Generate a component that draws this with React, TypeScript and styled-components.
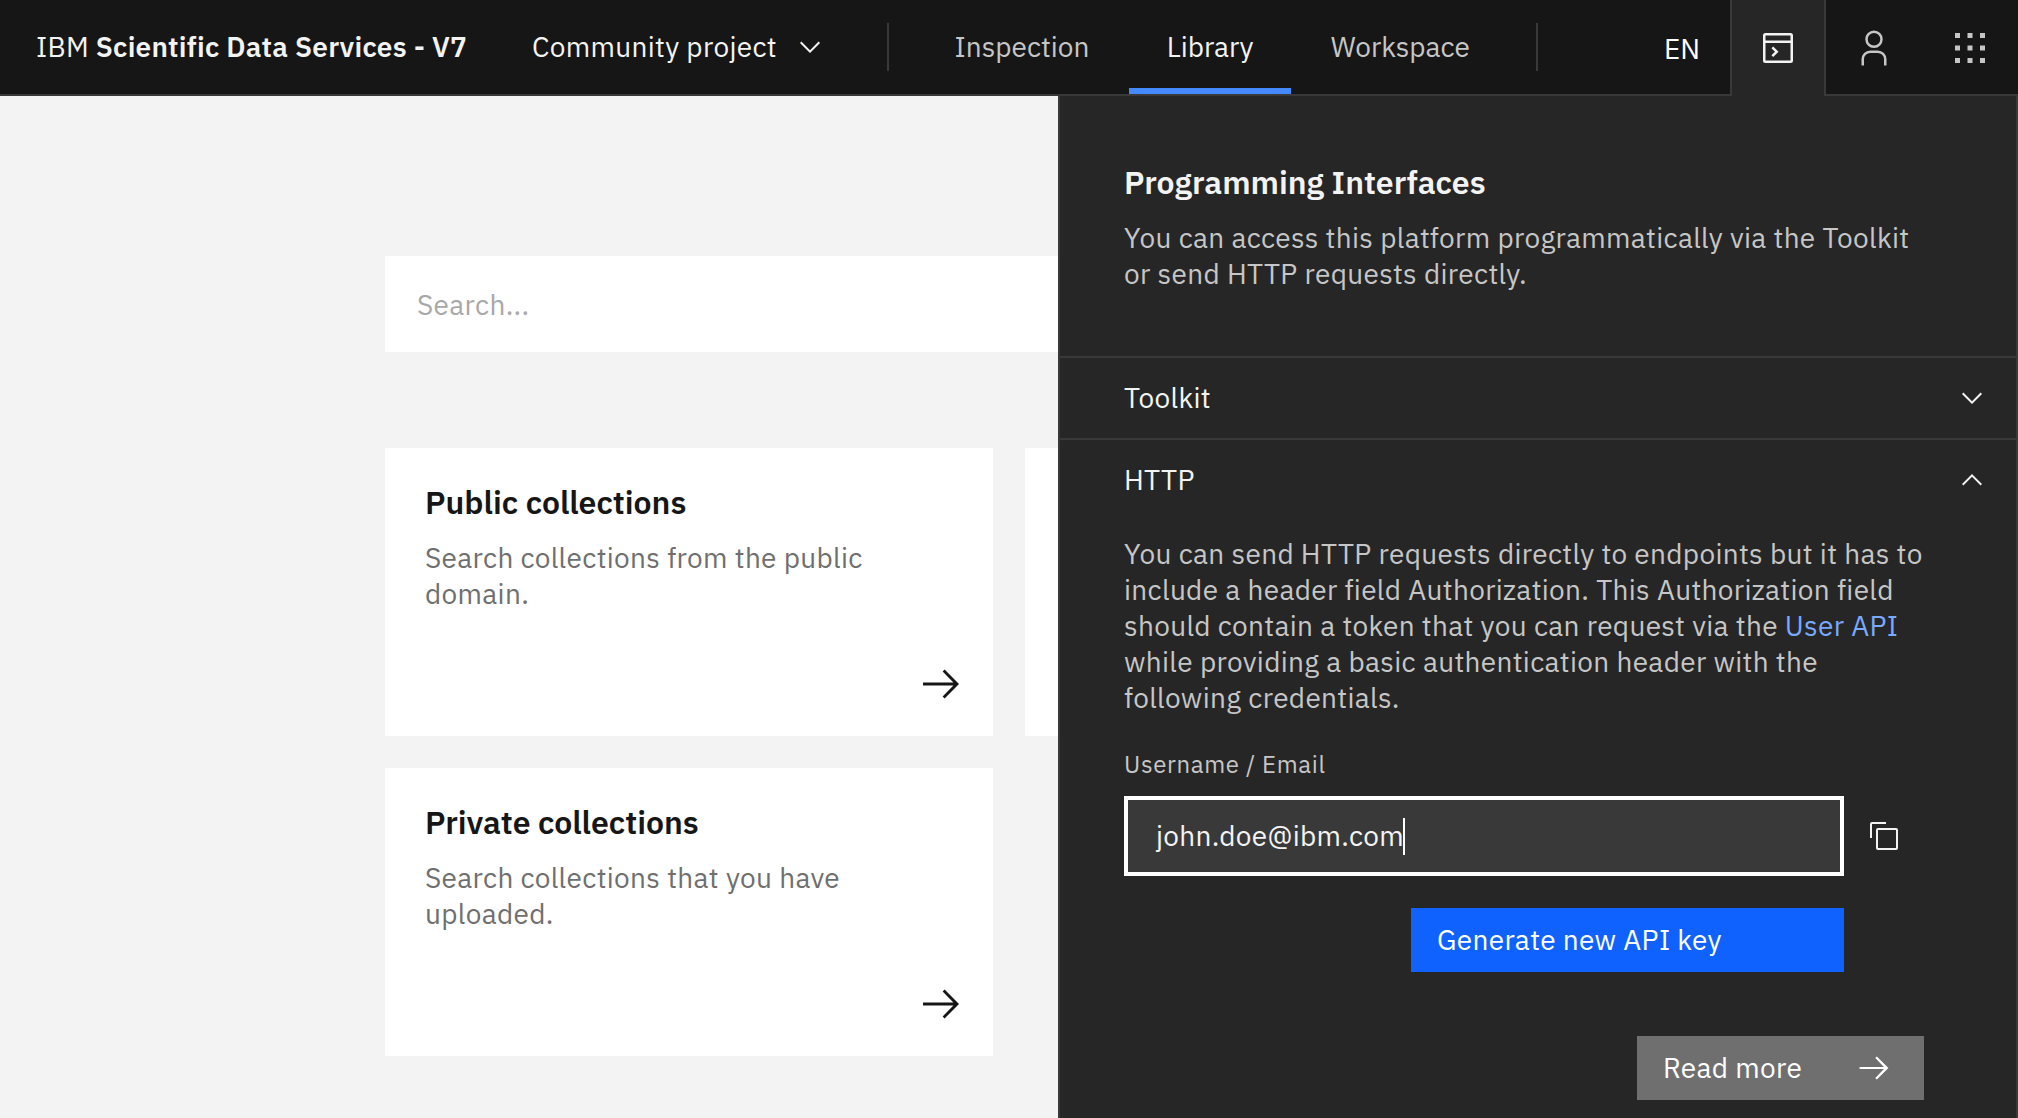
import React from "react";
import styled, { createGlobalStyle } from "styled-components";

const colors = {
  black: "#161616",
  g90: "#262626",
  g80: "#393939",
  g60: "#6f6f6f",
  g40: "#a8a8a8",
  g30: "#c6c6c6",
  g10: "#f3f3f3",
  white: "#ffffff",
  blue: "#0f62fe",
  blue50: "#4589ff",
  link: "#78a9ff",
};

const GlobalStyle = createGlobalStyle`
  *, *::before, *::after { box-sizing: border-box; }
  body {
    margin: 0;
    font-family: "IBM Plex Sans", Roboto, "Open Sans", sans-serif;
    font-size: 28px;
    line-height: 36px;
    letter-spacing: 0.32px;
  }
  h1, h2, p { margin: 0; }
`;

const Page = styled.div`
  display: flex;
  flex-direction: column;
  width: 2018px;
  height: 1118px;
  overflow: hidden;
  background: ${colors.g10};
`;

const Header = styled.header`
  display: flex;
  flex: none;
  height: 96px;
  background: ${colors.black};
  color: ${colors.g10};
`;

const HeaderMain = styled.div`
  display: flex;
  flex: 1;
  align-items: center;
  padding-left: 36px;
  border-bottom: 2px solid ${colors.g80};
  white-space: nowrap;
`;

const Brand = styled.div`
  width: 496px;
  letter-spacing: 0.22px;
  b { font-weight: 600; }
`;

const ProjectSwitch = styled.div`
  display: flex;
  align-items: center;
  justify-content: space-between;
  width: 294px;
`;

const Divider = styled.div<{ $left: number }>`
  flex: none;
  width: 2px;
  height: 48px;
  margin-left: ${(p) => p.$left}px;
  background: ${colors.g80};
`;

const Nav = styled.nav`
  display: flex;
  align-self: stretch;
  gap: 2px;
  margin-left: 28px;
  letter-spacing: 0;
`;

const NavItem = styled.a<{ $active?: boolean }>`
  display: flex;
  align-items: center;
  padding: 6px 37.6px 0;
  border-bottom: 6px solid ${(p) => (p.$active ? colors.blue50 : "transparent")};
  color: ${(p) => (p.$active ? colors.g10 : colors.g30)};
`;

const Language = styled.div`
  margin-left: auto;
  padding: 4px 30px 0 0;
  color: ${colors.white};
  letter-spacing: 0;
`;

const HeaderAction = styled.button<{ $open?: boolean }>`
  display: flex;
  align-items: center;
  justify-content: center;
  width: 96px;
  height: 96px;
  padding: ${(p) => (p.$open ? 0 : 2)}px 0 0;
  border: 0 solid ${colors.g80};
  border-width: ${(p) => (p.$open ? "0 2px" : "0 0 2px")};
  background: ${(p) => (p.$open ? colors.g90 : colors.black)};
  color: ${(p) => (p.$open ? colors.g10 : colors.g30)};
`;

const Body = styled.div`
  display: flex;
  flex: 1;
  min-height: 0;
`;

const Main = styled.main`
  display: flex;
  flex-direction: column;
  gap: 96px;
  width: 1058px;
  padding: 160px 0 0 385px;
  overflow: hidden;
`;

const Search = styled.div`
  display: flex;
  flex: none;
  align-items: center;
  height: 96px;
  padding: 2px 32px 0;
  background: ${colors.white};
  color: ${colors.g40};
`;

const CardGrid = styled.div`
  display: grid;
  grid-template-columns: 608px 608px;
  grid-auto-rows: 288px;
  gap: 32px;
`;

const CardBox = styled.article`
  display: flex;
  flex-direction: column;
  padding: 34px 32px 32px 40px;
  background: ${colors.white};
  color: ${colors.black};
`;

const Title = styled.h2`
  font-size: 32px;
  font-weight: 600;
  line-height: 40px;
  letter-spacing: 0;
`;

const CardText = styled.p`
  width: 480px;
  margin-top: 18px;
  color: ${colors.g60};
`;

const CardArrow = styled.div`
  display: flex;
  justify-content: flex-end;
  margin-top: auto;
`;

const Panel = styled.aside`
  display: flex;
  flex: none;
  flex-direction: column;
  width: 960px;
  border: 0 solid ${colors.g80};
  border-width: 0 2px;
  background: ${colors.g90};
  color: ${colors.g10};
`;

const Intro = styled.section`
  height: 260px;
  padding: 66px 64px 0;
`;

const IntroText = styled.p`
  width: 800px;
  margin-top: 18px;
  color: ${colors.g30};
`;

const AccordionHead = styled.div`
  display: flex;
  flex: none;
  align-items: center;
  justify-content: space-between;
  height: 82px;
  padding: 0 28px 0 64px;
  border-top: 2px solid ${colors.g80};
`;

const AccordionBody = styled.div`
  display: flex;
  flex-direction: column;
  padding: 16px 92px 0 64px;
`;

const Copy = styled.p`
  color: ${colors.g30};
  white-space: nowrap;
`;

const Link = styled.a`
  color: ${colors.link};
`;

const Label = styled.label`
  margin-top: 32px;
  margin-bottom: 16px;
  font-size: 24px;
  line-height: 32px;
  letter-spacing: 0.64px;
  color: ${colors.g30};
`;

const FieldRow = styled.div`
  display: flex;
  align-items: center;
  gap: 24px;
`;

const Field = styled.div`
  display: flex;
  align-items: center;
  width: 720px;
  height: 80px;
  padding-left: 28px;
  border: 4px solid ${colors.white};
  background: ${colors.g80};
`;

const Caret = styled.span`
  width: 2px;
  height: 37px;
  margin-left: -0.6px;
  background: ${colors.white};
`;

const Button = styled.button<{ $kind: "primary" | "secondary" }>`
  display: flex;
  align-items: center;
  justify-content: space-between;
  width: ${(p) => (p.$kind === "primary" ? 433 : 287)}px;
  height: 64px;
  margin: ${(p) => (p.$kind === "primary" ? "32px 0 0 287px" : "64px 0 0 513px")};
  padding: 0 34px 0 26px;
  border: 0;
  background: ${(p) => (p.$kind === "primary" ? colors.blue : colors.g60)};
  color: ${colors.white};
  font: inherit;
  letter-spacing: 0.32px;
`;

const Arrow = ({ size }: { size: number }) => (
  <svg width={size} height={size} viewBox="0 0 20 20" fill="currentColor">
    <path d="M11.8 2.8L10.8 3.8 16.2 9.3 1 9.3 1 10.7 16.2 10.7 10.8 16.2 11.8 17.2 19 10z" />
  </svg>
);

const Chevron = ({ up }: { up?: boolean }) => (
  <svg width="32" height="32" viewBox="0 0 16 16" fill="currentColor">
    <path d={up ? "M8 5L13 10 12.3 10.7 8 6.4 3.7 10.7 3 10z" : "M8 11L3 6 3.7 5.3 8 9.6 12.3 5.3 13 6z"} />
  </svg>
);

const Terminal = () => (
  <svg width="40" height="40" viewBox="0 0 32 32" fill="currentColor">
    <path d="M26 4H6a2 2 0 00-2 2v20a2 2 0 002 2h20a2 2 0 002-2V6a2 2 0 00-2-2zm0 2v4H6V6zM6 26V12h20v14z" />
    <path d="M10.76 16.18L13.58 19.01 10.76 21.84 12.18 23.25 16.41 19.01 12.18 14.77z" />
  </svg>
);

const User = () => (
  <svg width="40" height="40" viewBox="0 0 32 32" fill="currentColor">
    <path d="M16 4a5 5 0 11-5 5 5 5 0 015-5m0-2a7 7 0 107 7 7 7 0 00-7-7zM26 30h-2v-5a5 5 0 00-5-5h-6a5 5 0 00-5 5v5H6v-5a7 7 0 017-7h6a7 7 0 017 7z" />
  </svg>
);

const Switcher = () => (
  <svg width="40" height="40" viewBox="0 0 32 32" fill="currentColor">
    {[4, 14, 24].map((y) => [4, 14, 24].map((x) => <path key={`${x}-${y}`} d={`M${x} ${y}h4v4h-4z`} />))}
  </svg>
);

const CopyIcon = () => (
  <svg width="32" height="32" viewBox="0 0 32 32" fill="currentColor">
    <path d="M28 10v18H10V10h18m0-2H10a2 2 0 00-2 2v18a2 2 0 002 2h18a2 2 0 002-2V10a2 2 0 00-2-2z" />
    <path d="M4 18H2V4a2 2 0 012-2h14v2H4z" />
  </svg>
);

const Card = ({ title, text }: { title: string; text: string }) => (
  <CardBox>
    <Title>{title}</Title>
    <CardText>{text}</CardText>
    <CardArrow>
      <Arrow size={40} />
    </CardArrow>
  </CardBox>
);

export default function App() {
  return (
    <Page>
      <GlobalStyle />
      <Header>
        <HeaderMain>
          <Brand>
            IBM <b>Scientific Data Services - V7</b>
          </Brand>
          <ProjectSwitch>
            Community project
            <Chevron />
          </ProjectSwitch>
          <Divider $left={61} />
          <Nav>
            <NavItem>Inspection</NavItem>
            <NavItem $active>Library</NavItem>
            <NavItem>Workspace</NavItem>
          </Nav>
          <Divider $left={28.6} />
          <Language>EN</Language>
        </HeaderMain>
        <HeaderAction $open>
          <Terminal />
        </HeaderAction>
        <HeaderAction>
          <User />
        </HeaderAction>
        <HeaderAction>
          <Switcher />
        </HeaderAction>
      </Header>
      <Body>
        <Main>
          <Search>Search...</Search>
          <CardGrid>
            <Card title="Public collections" text="Search collections from the public domain." />
            <CardBox />
            <Card title="Private collections" text="Search collections that you have uploaded." />
          </CardGrid>
        </Main>
        <Panel>
          <Intro>
            <Title>Programming Interfaces</Title>
            <IntroText>You can access this platform programmatically via the Toolkit or send HTTP requests directly.</IntroText>
          </Intro>
          <AccordionHead>
            Toolkit
            <Chevron />
          </AccordionHead>
          <AccordionHead>
            HTTP
            <Chevron up />
          </AccordionHead>
          <AccordionBody>
            <Copy>
              You can send HTTP requests directly to endpoints but it has to
              <br />
              include a header field Authorization. This Authorization field
              <br />
              should contain a token that you can request via the <Link>User API</Link>
              <br />
              while providing a basic authentication header with the
              <br />
              following credentials.
            </Copy>
            <Label>Username / Email</Label>
            <FieldRow>
              <Field>
                john.doe@ibm.com
                <Caret />
              </Field>
              <CopyIcon />
            </FieldRow>
            <Button $kind="primary">Generate new API key</Button>
            <Button $kind="secondary">
              Read more
              <Arrow size={32} />
            </Button>
          </AccordionBody>
        </Panel>
      </Body>
    </Page>
  );
}
